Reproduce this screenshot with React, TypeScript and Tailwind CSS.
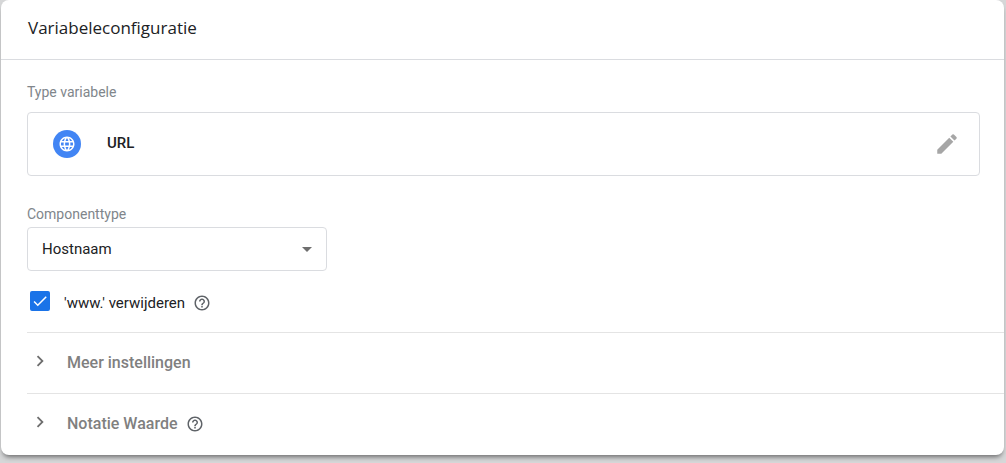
import { useState } from "react";
import { MdArrowDropDown, MdCheck, MdChevronRight, MdEdit, MdHelpOutline, MdLanguage } from "react-icons/md";

function HelpButton({ label }: { label: string }) {
  return (
    <button type="button" aria-label={label} className="ml-2 flex text-[#5f6368]">
      <MdHelpOutline size={18} />
    </button>
  );
}

function Section({ title, help }: { title: string; help?: boolean }) {
  return (
    <section className="flex h-[61px] items-center border-t border-[#e4e4e4] text-base font-medium text-[#80807f]">
      <button type="button" className="flex items-center">
        <MdChevronRight size={22} className="mr-4 mb-1 ml-[2px] text-[#6e6e6e]" />
        {title}
      </button>
      {help && <HelpButton label={title} />}
    </section>
  );
}

function App() {
  const [stripWww, setStripWww] = useState(true);

  return (
    <div className="bg-[#d6d7d8] px-px pb-2 font-['Roboto',sans-serif] text-[#202124]">
      <main className="mr-px rounded-lg bg-white pb-px shadow-[0_4px_5px_-2px_rgba(0,0,0,0.5)]">
        <header className="flex h-15 items-center border-b border-[#dadce0] px-[27px] pb-1">
          <h1 className="font-['Open_Sans',sans-serif] text-[17px]">Variabeleconfiguratie</h1>
        </header>

        <div className="pt-6 pl-[26px]">
          <div className="mr-6">
            <h2 className="mb-3 text-sm leading-4 text-[#80868b]">Type variabele</h2>
            <div className="flex h-16 items-center rounded border border-[#dadce0] px-[25px]">
              <span className="flex size-7 items-center justify-center rounded-full bg-[#4285f4] text-white">
                <MdLanguage size={18} />
              </span>
              <span className="ml-[26px] flex-1 pb-[2px] text-[15px] font-medium">URL</span>
              <button type="button" aria-label="Bewerken" className="-mr-[6px] text-[#a6a6a6]">
                <MdEdit size={26} />
              </button>
            </div>
          </div>

          <label htmlFor="component" className="mt-[30px] mb-[5px] block text-sm leading-4 text-[#80868b]">
            Componenttype
          </label>
          <div className="relative max-w-[300px]">
            <select
              id="component"
              defaultValue="Hostnaam"
              className="block h-11 w-full appearance-none rounded border border-[#dadce0] bg-white px-[14px] text-[15px]"
            >
              <option>Hostnaam</option>
            </select>
            <MdArrowDropDown size={24} className="pointer-events-none absolute top-[10px] right-2 text-[#6e6e6e]" />
          </div>

          <div className="mt-5 mb-[17px] flex h-6 items-center text-[15px]">
            <span className="relative mb-1 ml-[3px] flex">
              <input
                id="www"
                type="checkbox"
                checked={stripWww}
                onChange={(e) => setStripWww(e.target.checked)}
                className="size-5 appearance-none rounded-xs border-2 border-[#5f6368] checked:border-[#1a73e8] checked:bg-[#1a73e8]"
              />
              {stripWww && <MdCheck size={18} className="pointer-events-none absolute top-px left-px text-white" />}
            </span>
            <label htmlFor="www" className="ml-[14px]">'www.' verwijderen</label>
            <HelpButton label="Uitleg" />
          </div>

          <Section title="Meer instellingen" />
          <Section title="Notatie Waarde" help />
        </div>
      </main>
    </div>
  );
}

export default App;
